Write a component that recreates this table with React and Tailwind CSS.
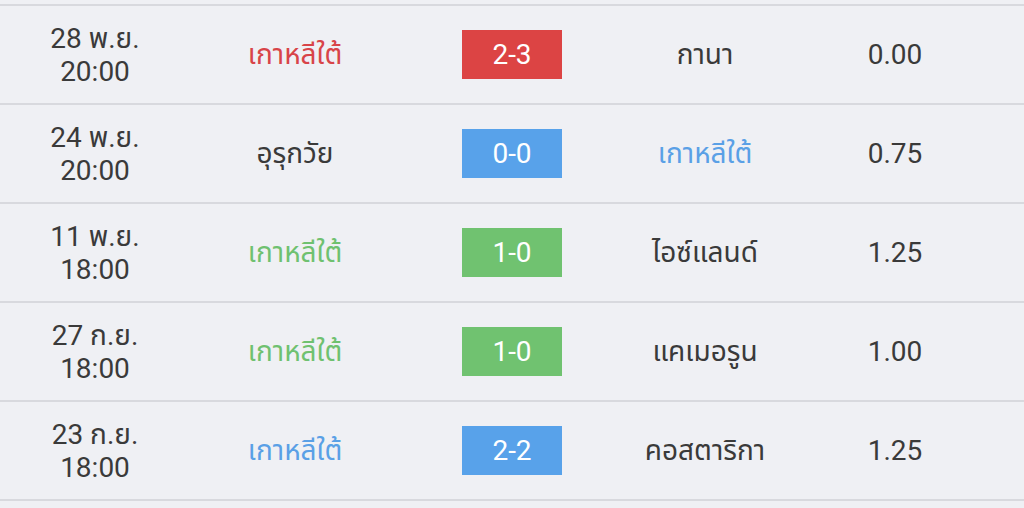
import React from "react";

const rows = [
  { d: "28 พ.ย.", t: "20:00", home: "เกาหลีใต้", homeC: "text-[#d84448]", score: "2-3", box: "bg-[#dc4444]", away: "กานา", awayC: "text-[#3a3a3a]", odds: "0.00" },
  { d: "24 พ.ย.", t: "20:00", home: "อุรุกวัย", homeC: "text-[#3a3a3a]", score: "0-0", box: "bg-[#58a2ea]", away: "เกาหลีใต้", awayC: "text-[#5aa0e6]", odds: "0.75" },
  { d: "11 พ.ย.", t: "18:00", home: "เกาหลีใต้", homeC: "text-[#6fc170]", score: "1-0", box: "bg-[#70c270]", away: "ไอซ์แลนด์", awayC: "text-[#3a3a3a]", odds: "1.25" },
  { d: "27 ก.ย.", t: "18:00", home: "เกาหลีใต้", homeC: "text-[#6fc170]", score: "1-0", box: "bg-[#70c270]", away: "แคเมอรูน", awayC: "text-[#3a3a3a]", odds: "1.00" },
  { d: "23 ก.ย.", t: "18:00", home: "เกาหลีใต้", homeC: "text-[#5aa0e6]", score: "2-2", box: "bg-[#58a2ea]", away: "คอสตาริกา", awayC: "text-[#3a3a3a]", odds: "1.25" },
];

export default function App() {
  return (
    <div
      className="w-[1024px] h-[508px] overflow-hidden bg-[#eff0f4] pt-[4px] text-[28px] text-[#3a3a3a]"
      style={{ fontFamily: 'Roboto, "Noto Sans", "Noto Sans Thai", "Noto Sans CJK SC", sans-serif' }}
    >
      <div className="border-t-2 border-[#d8d9de]">
        {rows.map((r, i) => (
          <div
            key={i}
            className="grid grid-cols-[190px_210px_224px_162px_218px] items-center h-[99px] border-b-2 border-[#d8d9de]"
          >
            <div className="flex flex-col items-center leading-[33px]">
              <span>{r.d}</span>
              <span>{r.t}</span>
            </div>
            <div className={`text-center ${r.homeC}`}>{r.home}</div>
            <div className="flex justify-center">
              <div className={`w-[100px] h-[49px] flex items-center justify-center text-white ${r.box}`}>
                {r.score}
              </div>
            </div>
            <div className={`text-center ${r.awayC}`}>{r.away}</div>
            <div className="text-center">{r.odds}</div>
          </div>
        ))}
      </div>
    </div>
  );
}
